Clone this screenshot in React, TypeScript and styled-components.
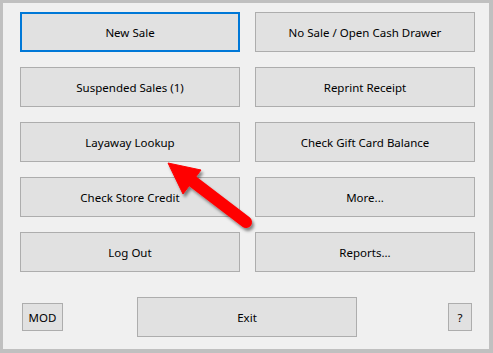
import styled, { createGlobalStyle } from "styled-components";

const GlobalStyle = createGlobalStyle`
  html, body {
    margin: 0;
    padding: 0;
    background: #f0f0f0;
  }
  * {
    box-sizing: border-box;
  }
`;

const Frame = styled.div`
  position: relative;
  width: 493px;
  height: 353px;
  border-style: solid;
  border-color: #c0c0c0;
  border-width: 3px 4px 4px 3px;
  background: #f0f0f0;
  font-family: "Segoe UI", "Noto Sans", "Open Sans", sans-serif;
  font-size: 11.5px;
  color: #000;
`;

const ButtonGrid = styled.div`
  display: grid;
  grid-template-columns: 220px 220px;
  grid-auto-rows: 40px;
  column-gap: 15px;
  row-gap: 15px;
  padding: 9px 0 0 17px;
`;

const Button = styled.button<{ $focused?: boolean; $width?: number; $height?: number }>`
  width: ${(p) => (p.$width ? `${p.$width}px` : "100%")};
  height: ${(p) => (p.$height ? `${p.$height}px` : "40px")};
  padding: 0;
  margin: 0;
  background: #e1e1e1;
  border: ${(p) => (p.$focused ? "2px solid #0078d7" : "1px solid #adadad")};
  font-family: inherit;
  font-size: 11.5px;
  color: #000;
  display: flex;
  align-items: center;
  justify-content: center;
`;

const BottomRow = styled.div`
  display: flex;
  align-items: center;
  padding: 0 0 0 19px;
  margin-top: 25px;
`;

const Spacer = styled.div<{ $w: number }>`
  width: ${(p) => p.$w}px;
  flex: none;
`;

const ArrowLayer = styled.svg`
  position: absolute;
  left: 157px;
  top: 147px;
  width: 110px;
  height: 90px;
  pointer-events: none;
`;

const Arrow = () => (
  <ArrowLayer viewBox="0 0 110 90">
    <defs>
      <filter id="shade" x="-20%" y="-20%" width="150%" height="150%">
        <feDropShadow dx="2" dy="3" stdDeviation="1.6" floodColor="#000" floodOpacity="0.45" />
      </filter>
    </defs>
    <g filter="url(#shade)" fill="#ff0000" stroke="#ff0000">
      <line x1="27" y1="27" x2="86" y2="72" strokeWidth="12" strokeLinecap="round" />
      <polygon points="8,13 41,20 23,44" strokeWidth="1" strokeLinejoin="round" />
    </g>
  </ArrowLayer>
);

const mainButtons: { label: string; focused?: boolean }[] = [
  { label: "New Sale", focused: true },
  { label: "No Sale / Open Cash Drawer" },
  { label: "Suspended Sales (1)" },
  { label: "Reprint Receipt" },
  { label: "Layaway Lookup" },
  { label: "Check Gift Card Balance" },
  { label: "Check Store Credit" },
  { label: "More..." },
  { label: "Log Out" },
  { label: "Reports..." },
];

export default function App() {
  return (
    <>
      <GlobalStyle />
      <Frame>
        <ButtonGrid>
          {mainButtons.map((b) => (
            <Button key={b.label} $focused={b.focused}>
              {b.label}
            </Button>
          ))}
        </ButtonGrid>
        <BottomRow>
          <Button $width={41} $height={28}>MOD</Button>
          <Spacer $w={74} />
          <Button $width={220} $height={40}>Exit</Button>
          <Spacer $w={91} />
          <Button $width={24} $height={28}>?</Button>
        </BottomRow>
        <Arrow />
      </Frame>
    </>
  );
}
